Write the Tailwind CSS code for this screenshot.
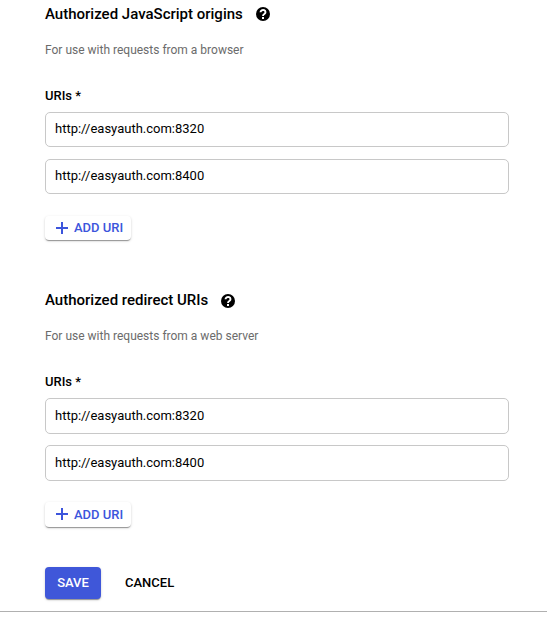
<!DOCTYPE html>
<html lang="en"><head><meta charset="utf-8"><title>OAuth client</title>
<script src="https://cdn.jsdelivr.net/npm/@tailwindcss/browser@4"></script></head>
<body class="bg-white font-['Roboto',sans-serif] text-black">
<main class="h-[612px] w-[547px] border-b border-[#b0b0b0] pl-[45px] pr-[38px]">
<section class="h-[286px] pt-[4px]">
<h2 class="flex h-5 items-center gap-[13px] text-[15px] font-medium leading-5"><span>Authorized JavaScript origins</span><svg class="size-[14px]" viewBox="0 0 14 14"><circle cx="7" cy="7" r="7"/><path d="M4.500 5.200a2.500 2.200 0 1 1 3.900 1.800C7.500 7.600 7 7.900 7 9" fill="none" stroke="white" stroke-width="1.900"/><path d="M6 10h2v2H6z" fill="white"/></svg></h2>
<p class="mt-4 text-xs leading-5 text-[#6b6b6b]">For use with requests from a browser</p>
<p class="mt-[26px] text-[13px] font-medium leading-5">URIs *</p>
<div class="mt-[6px] flex h-[35px] items-center rounded-[5px] border border-[#c8c8c8] px-[9px] pb-[2px] text-[13px]">http://easyauth.com:8320</div>
<div class="mt-3 flex h-[35px] items-center rounded-[5px] border border-[#c8c8c8] px-[9px] pb-[2px] text-[13px]">http://easyauth.com:8400</div>
<button class="mt-[22px] flex h-6 w-[86px] items-center gap-[6px] rounded-[4px] pl-[11px] text-[13px] font-medium text-[#3c55dc] shadow-[0_2px_1px_-1px_rgba(0,0,0,0.25),0_1px_1px_rgba(0,0,0,0.14),0_1px_3px_rgba(0,0,0,0.15)]"><svg class="size-3" viewBox="0 0 12 12" fill="none" stroke="currentColor" stroke-width="2"><path d="M6 0v12M0 6h12"/></svg>ADD URI</button>
</section>
<section class="h-[281px] pt-[4px]">
<h2 class="flex h-5 items-center gap-[13px] text-[15px] font-medium leading-5"><span>Authorized redirect URIs</span><svg class="mt-[2px] size-[14px]" viewBox="0 0 14 14"><circle cx="7" cy="7" r="7"/><path d="M4.500 5.200a2.500 2.200 0 1 1 3.900 1.800C7.500 7.600 7 7.900 7 9" fill="none" stroke="white" stroke-width="1.900"/><path d="M6 10h2v2H6z" fill="white"/></svg></h2>
<p class="mt-4 text-xs leading-5 text-[#6b6b6b]">For use with requests from a web server</p>
<p class="mt-[26px] text-[13px] font-medium leading-5">URIs *</p>
<div class="mt-[6px] flex h-[36px] items-center rounded-[5px] border border-[#c8c8c8] px-[9px] text-[13px]">http://easyauth.com:8320</div>
<div class="mt-[11px] flex h-[36px] items-center rounded-[5px] border border-[#c8c8c8] px-[9px] text-[13px]">http://easyauth.com:8400</div>
<button class="mt-[21px] flex h-[25px] w-[86px] items-center gap-[6px] rounded-[4px] pl-[11px] text-[13px] font-medium text-[#3c55dc] shadow-[0_2px_1px_-1px_rgba(0,0,0,0.25),0_1px_1px_rgba(0,0,0,0.14),0_1px_3px_rgba(0,0,0,0.15)]"><svg class="mb-px size-3" viewBox="0 0 12 12" fill="none" stroke="currentColor" stroke-width="2"><path d="M6 0v12M0 6h12"/></svg>ADD URI</button>
</section>
<div class="flex gap-6 text-[13px] font-medium"><button class="h-8 w-14 rounded-[4px] bg-[#3f57d9] text-white shadow-[0_2px_1px_-1px_rgba(0,0,0,0.25),0_1px_1px_rgba(0,0,0,0.14),0_1px_3px_rgba(0,0,0,0.15)]">SAVE</button><button class="h-8">CANCEL</button></div>
</main></body></html>
